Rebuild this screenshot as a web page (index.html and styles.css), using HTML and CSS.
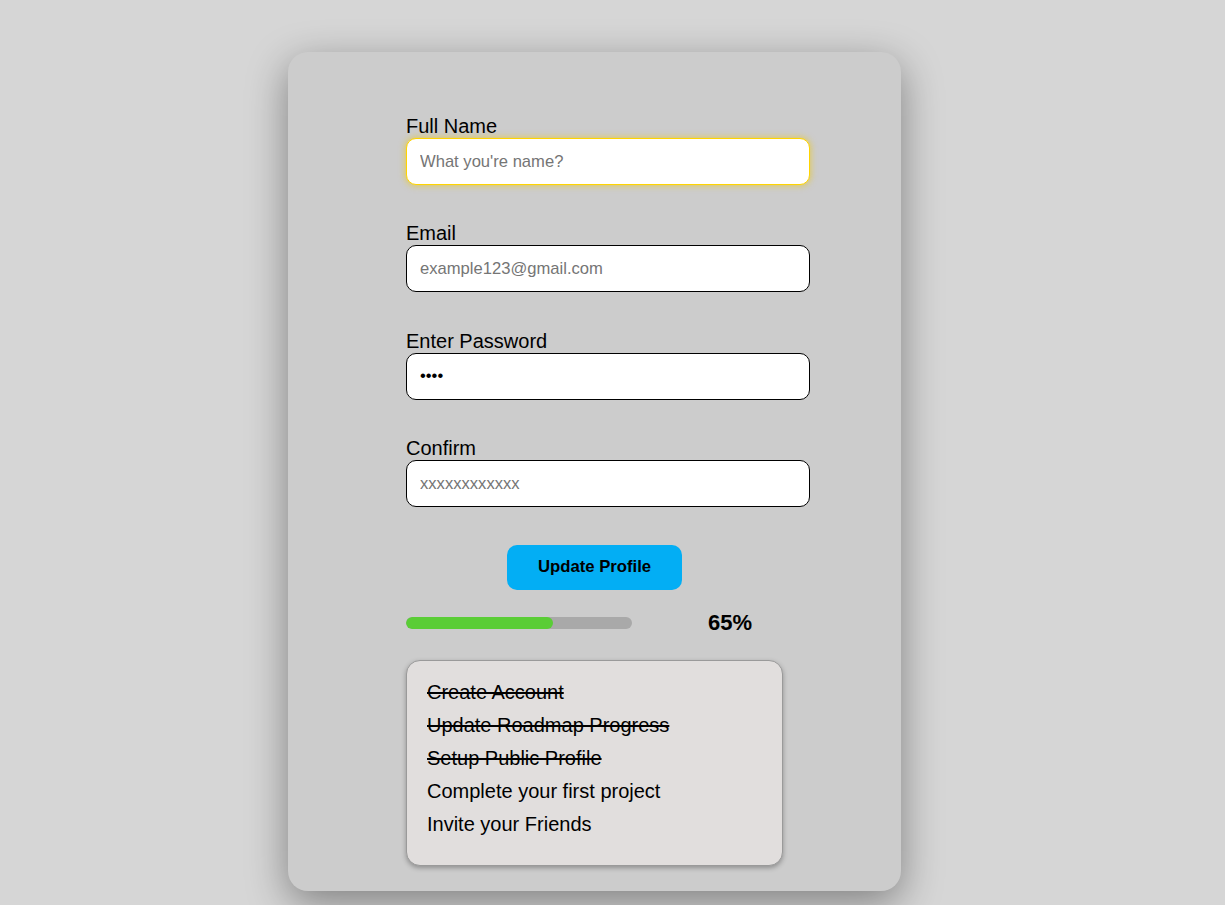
FILE: index.html
```html
<!DOCTYPE html>
<html lang="en">
<head>
<meta charset="utf-8">
<title>Update Profile</title>
<link rel="stylesheet" href="styles.css">
</head>
<body>
<div class="card">
  <form class="form">
    <div class="field">
      <label class="label" for="name">Full Name</label>
      <input class="input input-focus" id="name" type="text" placeholder="What you're name?">
    </div>
    <div class="field">
      <label class="label" for="email">Email</label>
      <input class="input" id="email" type="email" placeholder="example123@gmail.com">
    </div>
    <div class="field">
      <label class="label" for="pass">Enter Password</label>
      <input class="input" id="pass" type="password" value="abcd">
    </div>
    <div class="field">
      <label class="label" for="confirm">Confirm</label>
      <input class="input" id="confirm" type="password" placeholder="xxxxxxxxxxxx">
    </div>
  </form>
  <button class="btn" type="button">Update Profile</button>
  <div class="progress-row">
    <div class="bar"><div class="bar-fill" style="width:65%"></div></div>
    <span class="pct">65%</span>
  </div>
  <div class="tasks">
    <ul class="task-list">
      <li class="done">Create Account</li>
      <li class="done">Update Roadmap Progress</li>
      <li class="done">Setup Public Profile</li>
      <li>Complete your first project</li>
      <li>Invite your Friends</li>
    </ul>
  </div>
</div>
</body>
</html>
```
FILE: styles.css
```css
html, body {
  margin: 0;
  padding: 0;
}
body {
  background: #d6d6d6;
  font-family: "Liberation Sans", Arial, sans-serif;
  color: #000;
  height: 905px;
  overflow: hidden;
}
.card {
  box-sizing: border-box;
  width: 613px;
  height: 839px;
  margin: 52px 0 0 288px;
  background: #cccccc;
  border-radius: 20px;
  box-shadow: 0 12px 40px rgba(0, 0, 0, 0.4);
  padding-top: 63px;
  display: flex;
  flex-direction: column;
}
.form {
  margin: 0 0 0 118px;
  display: flex;
  flex-direction: column;
  gap: 37.4px;
}
.field {
  display: flex;
  flex-direction: column;
}
.label {
  font-size: 20px;
  line-height: 23px;
}
.input {
  box-sizing: border-box;
  width: 404px;
  height: 47px;
  border: 1px solid #000;
  border-radius: 10px;
  background: #fff;
  padding: 0 13px;
  font-family: "Liberation Sans", Arial, sans-serif;
  font-size: 16.6px;
  color: #000;
  outline: none;
}
.input::placeholder {
  color: #757575;
}
.input-focus {
  border: 1.5px solid #ffd400;
  box-shadow: 0 0 6px 1px rgba(240, 200, 0, 0.55);
}
.btn {
  align-self: center;
  margin-top: 37.6px;
  width: 175px;
  height: 45px;
  border: none;
  border-radius: 10px;
  background: #03aef4;
  color: #000;
  font-family: "Liberation Sans", Arial, sans-serif;
  font-weight: bold;
  font-size: 16.7px;
}
.progress-row {
  margin: 27px 0 0 118px;
  display: flex;
  align-items: center;
  height: 12px;
}
.bar {
  width: 226px;
  height: 12px;
  border-radius: 6px;
  background: #a9a9a9;
  overflow: hidden;
}
.bar-fill {
  height: 100%;
  background: #5acd36;
  border-radius: 6px;
}
.pct {
  margin-left: 76px;
  font-size: 22px;
  font-weight: bold;
  line-height: 12px;
}
.tasks {
  box-sizing: border-box;
  margin: 31px 0 0 118px;
  width: 377px;
  height: 206px;
  background: #e1dedd;
  border: 1px solid #9a9a9a;
  border-radius: 14px;
  box-shadow: 0 2px 5px rgba(0, 0, 0, 0.3);
  padding: 20px 20px 20px;
}
.task-list {
  list-style: none;
  margin: 0;
  padding: 0;
}
.task-list li {
  font-size: 20px;
  line-height: 23px;
  margin-bottom: 10px;
}
.task-list li.done {
  text-decoration: line-through;
}
```
